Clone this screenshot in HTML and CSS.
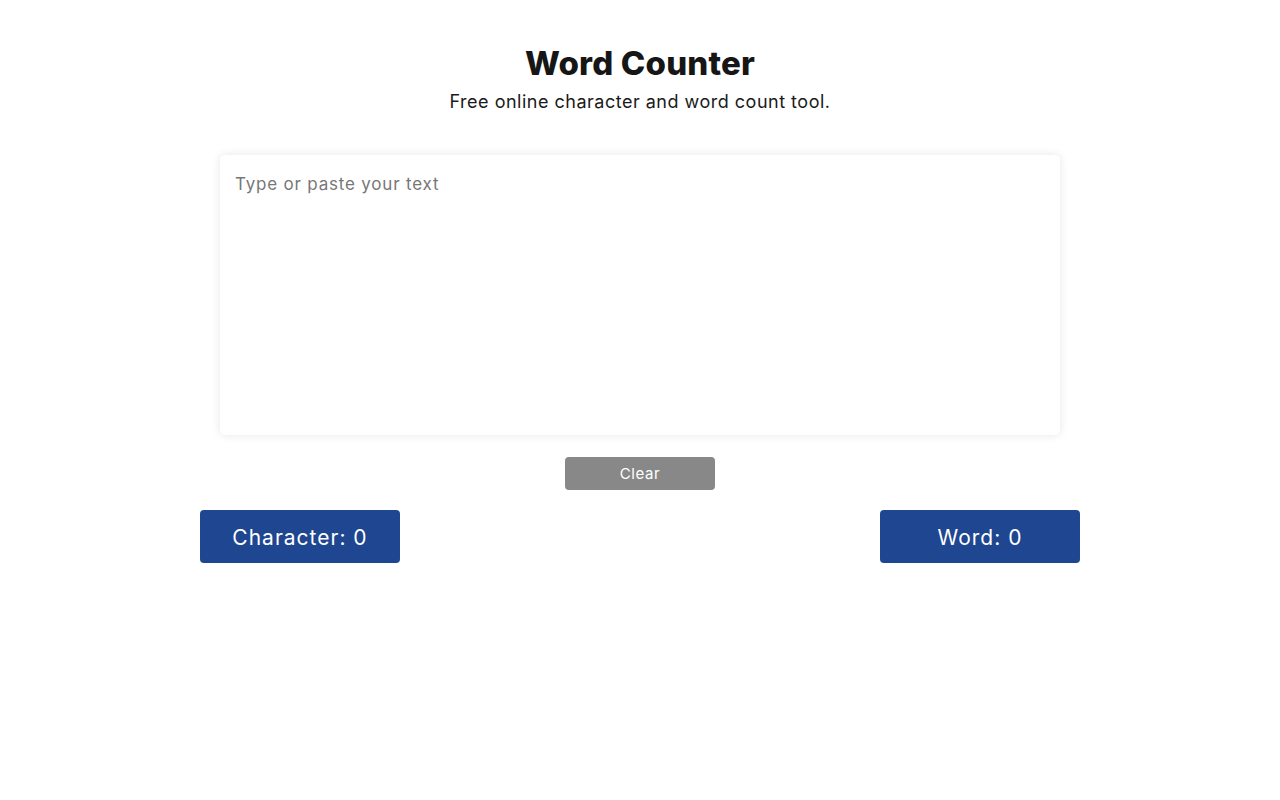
FILE: index.html
```html
<!DOCTYPE html>
<html lang="en">
<head>
<meta charset="utf-8">
<title>Word Counter</title>
<link rel="stylesheet" href="styles.css">
</head>
<body>
<main class="page">
  <header class="intro">
    <h1 class="title">Word Counter</h1>
    <p class="subtitle">Free online character and word count tool.</p>
  </header>
  <section class="editor">
    <textarea class="input" placeholder="Type or paste your text"></textarea>
    <button class="clear" type="button">Clear</button>
  </section>
  <section class="counts">
    <div class="count">Character: 0</div>
    <div class="count">Word: 0</div>
  </section>
</main>
</body>
</html>
```
FILE: styles.css
```css
* { box-sizing: border-box; }
html, body { margin: 0; padding: 0; background: #fff; }
body {
  font-family: "Inter", "Open Sans", sans-serif;
  color: #1a1a1a;
}
.page {
  width: 880px;
  margin: 0 auto;
  padding-top: 43px;
}
.intro { text-align: center; }
.title {
  margin: 0;
  font-size: 33px;
  line-height: 40px;
  font-weight: 800;
  letter-spacing: 0.2px;
  color: #161616;
}
.subtitle {
  margin: 7px 0 0;
  font-size: 18px;
  line-height: 24px;
  letter-spacing: 0.5px;
  color: #1a1a1a;
}
.editor {
  display: flex;
  flex-direction: column;
  align-items: center;
  margin-top: 41px;
}
.input {
  display: block;
  width: 840px;
  height: 280px;
  padding: 17px 15px 15px;
  border: none;
  border-radius: 5px;
  box-shadow: 0 0 10px rgba(0, 0, 0, 0.1);
  font-family: inherit;
  font-size: 17px;
  line-height: 24px;
  letter-spacing: 0.8px;
  color: #333;
  resize: none;
  outline: none;
}
.input::placeholder { color: #777; }
.clear {
  margin-top: 22px;
  width: 150px;
  height: 33px;
  border: none;
  border-radius: 4px;
  background: #888888;
  color: #fff;
  font-family: inherit;
  font-size: 15px;
  letter-spacing: 0.6px;
}
.counts {
  display: flex;
  justify-content: space-between;
  margin-top: 20px;
}
.count {
  width: 200px;
  height: 53px;
  display: flex;
  align-items: center;
  justify-content: center;
  padding-top: 2px;
  border-radius: 4px;
  background: #1f4690;
  color: #fff;
  font-size: 21px;
  letter-spacing: 1px;
}
```
